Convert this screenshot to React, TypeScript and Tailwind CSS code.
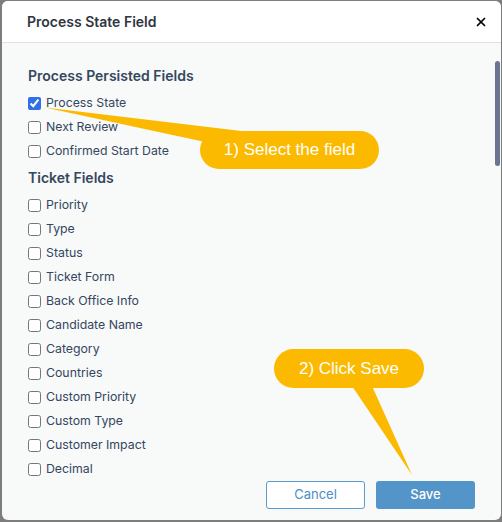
import { X } from "lucide-react"

const persisted = [
  { label: "Process State", checked: true },
  { label: "Next Review", checked: false },
  { label: "Confirmed Start Date", checked: false },
]

const ticket = [
  "Priority",
  "Type",
  "Status",
  "Ticket Form",
  "Back Office Info",
  "Candidate Name",
  "Category",
  "Countries",
  "Custom Priority",
  "Custom Type",
  "Customer Impact",
  "Decimal",
]

function Row({ label, checked }: { label: string; checked?: boolean }) {
  return (
    <label className="flex h-[24px] items-center gap-[5px] text-[12.3px] text-[#34475e]">
      <input
        type="checkbox"
        defaultChecked={checked}
        className="m-0 h-[13px] w-[13px] accent-[#2f6fe8]"
      />
      <span>{label}</span>
    </label>
  )
}

function Callouts() {
  return (
    <>
      <svg className="pointer-events-none absolute left-0 top-0" width="502" height="522">
        <polygon points="45,107.5 262,133.4 262,150 212,143.4" fill="#fbba00" />
        <polygon points="352,386 372,386 412,475" fill="#fbba00" />
      </svg>
      <div className="absolute left-[200px] top-[131px] flex h-[38px] w-[179px] items-center justify-center rounded-full bg-[#fbba00] font-['Liberation_Sans',Arial,sans-serif] text-[17px] text-white">
        1) Select the field
      </div>
      <div className="absolute left-[274px] top-[349px] flex h-[39px] w-[150px] items-center justify-center rounded-full bg-[#fbba00] font-['Liberation_Sans',Arial,sans-serif] text-[17px] text-white">
        2) Click Save
      </div>
    </>
  )
}

export default function App() {
  return (
    <div className="relative h-[522px] w-[502px] bg-[#7d7d7d] pb-[2px] pl-[2px] pr-[1px] pt-[1px] font-['Inter',sans-serif]">
      <div className="flex h-full flex-col overflow-hidden rounded-[6px] bg-[#f8f9f9]">
        <div className="flex h-[42px] shrink-0 items-center justify-between border-b border-[#dfe1e3] bg-white pl-[25px] pr-[13px]">
          <div className="text-[14px] font-semibold text-[#2f3640]">Process State Field</div>
          <X className="h-[14px] w-[14px] text-black" strokeWidth={3} />
        </div>
        <div className="relative flex-1 overflow-hidden">
          <div className="flex flex-col pl-[26px] pt-[23px]">
            <div className="h-[20px] text-[14px] font-semibold leading-[20px] text-[#34475e]">
              Process Persisted Fields
            </div>
            <div className="mt-[5px] flex flex-col">
              {persisted.map((p) => (
                <Row key={p.label} label={p.label} checked={p.checked} />
              ))}
            </div>
            <div className="mt-[5px] h-[20px] text-[14px] font-semibold leading-[20px] text-[#34475e]">
              Ticket Fields
            </div>
            <div className="mt-[5px] flex flex-col">
              {ticket.map((t) => (
                <Row key={t} label={t} />
              ))}
            </div>
          </div>
          <div className="absolute right-[1px] top-[18px] h-[105px] w-[5px] rounded-full bg-[#6b7590]" />
        </div>
        <div className="flex h-[42px] shrink-0 justify-end gap-[11px] pr-[26px] pt-[3px]">
          <button className="h-[28px] w-[99px] rounded-[3px] border border-[#5a9bd0] bg-white text-[13px] text-[#4a8fc8]">
            Cancel
          </button>
          <button className="h-[28px] w-[99px] rounded-[3px] bg-[#5394c9] text-[13px] font-medium text-white">
            Save
          </button>
        </div>
      </div>
      <Callouts />
    </div>
  )
}
